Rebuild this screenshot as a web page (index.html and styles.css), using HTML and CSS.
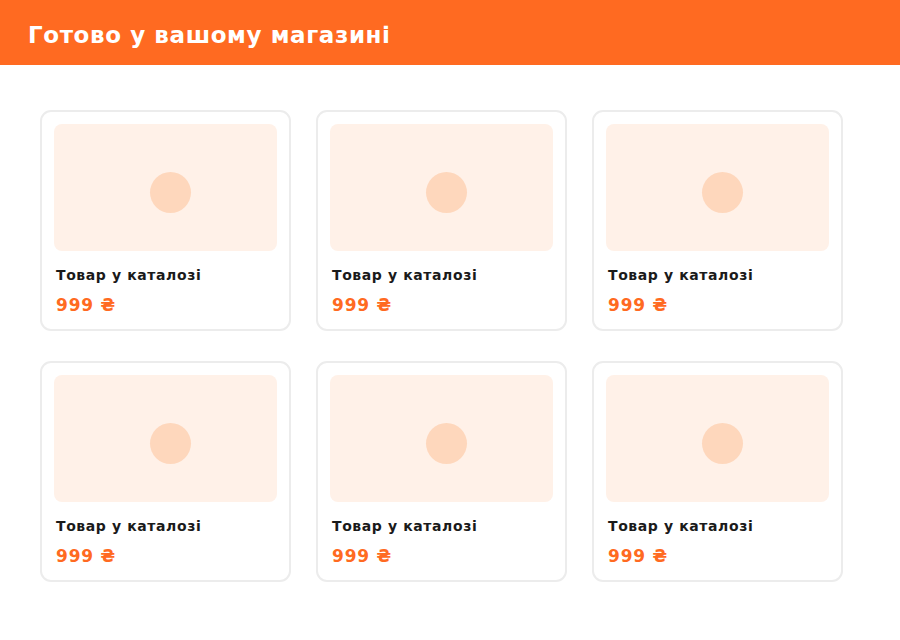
FILE: index.html
```html
<!DOCTYPE html>
<html lang="uk">
<head>
    <meta charset="UTF-8">
    <meta name="viewport" content="width=device-width, initial-scale=1.0">
    <title>Готово у вашому магазині</title>
    <link rel="stylesheet" href="styles.css">
</head>
<body>
    <header class="top-bar">
        <h1>Готово у вашому магазині</h1>
    </header>

    <main class="catalog">
        <div class="product-card">
            <div class="product-image"><span class="dot"></span></div>
            <div class="product-info">
                <div class="product-name">Товар у каталозі</div>
                <div class="product-price">999 ₴</div>
            </div>
        </div>
        <div class="product-card">
            <div class="product-image"><span class="dot"></span></div>
            <div class="product-info">
                <div class="product-name">Товар у каталозі</div>
                <div class="product-price">999 ₴</div>
            </div>
        </div>
        <div class="product-card">
            <div class="product-image"><span class="dot"></span></div>
            <div class="product-info">
                <div class="product-name">Товар у каталозі</div>
                <div class="product-price">999 ₴</div>
            </div>
        </div>
        <div class="product-card">
            <div class="product-image"><span class="dot"></span></div>
            <div class="product-info">
                <div class="product-name">Товар у каталозі</div>
                <div class="product-price">999 ₴</div>
            </div>
        </div>
        <div class="product-card">
            <div class="product-image"><span class="dot"></span></div>
            <div class="product-info">
                <div class="product-name">Товар у каталозі</div>
                <div class="product-price">999 ₴</div>
            </div>
        </div>
        <div class="product-card">
            <div class="product-image"><span class="dot"></span></div>
            <div class="product-info">
                <div class="product-name">Товар у каталозі</div>
                <div class="product-price">999 ₴</div>
            </div>
        </div>
    </main>
</body>
</html>
```

FILE: styles.css
```css
/* General Styles */
body {
    margin: 0;
    font-family: "DejaVu Sans", Verdana, sans-serif;
    background: #ffffff;
    color: #1a1a1a;
}

.top-bar {
    height: 65px;
    background: #ff6a21;
    display: flex;
    align-items: center;
    padding: 0 28px;
    box-sizing: border-box;
}

.top-bar h1 {
    margin: 0;
    color: #ffffff;
    font-size: 23px;
    font-weight: bold;
    letter-spacing: 0.6px;
    padding-top: 4px;
}

.catalog {
    display: grid;
    grid-template-columns: repeat(3, 251px);
    column-gap: 25px;
    row-gap: 30px;
    padding: 45px 0 0 40px;
}

.product-card {
    height: 221px;
    border: 2px solid #ececec;
    border-radius: 11px;
    padding: 12px;
    box-sizing: border-box;
    background: #ffffff;
}

.product-image {
    position: relative;
    height: 127px;
    background: #fff1e8;
    border-radius: 8px;
}

/* placeholder circle */
.product-image .dot {
    position: absolute;
    left: calc(50% - 16px);
    top: calc(50% - 16px);
    width: 41px;
    height: 41px;
    border-radius: 50%;
    background: #fed7bc;
}

.product-info {
    padding: 0 2px;
}

.product-name {
    margin-top: 14px;
    font-size: 14px;
    line-height: 20px;
    font-weight: bold;
    letter-spacing: 0.6px;
}

.product-price {
    margin-top: 9px;
    font-size: 17px;
    line-height: 22px;
    font-weight: bold;
    letter-spacing: 0.8px;
    color: #ff6a21;
}
```
